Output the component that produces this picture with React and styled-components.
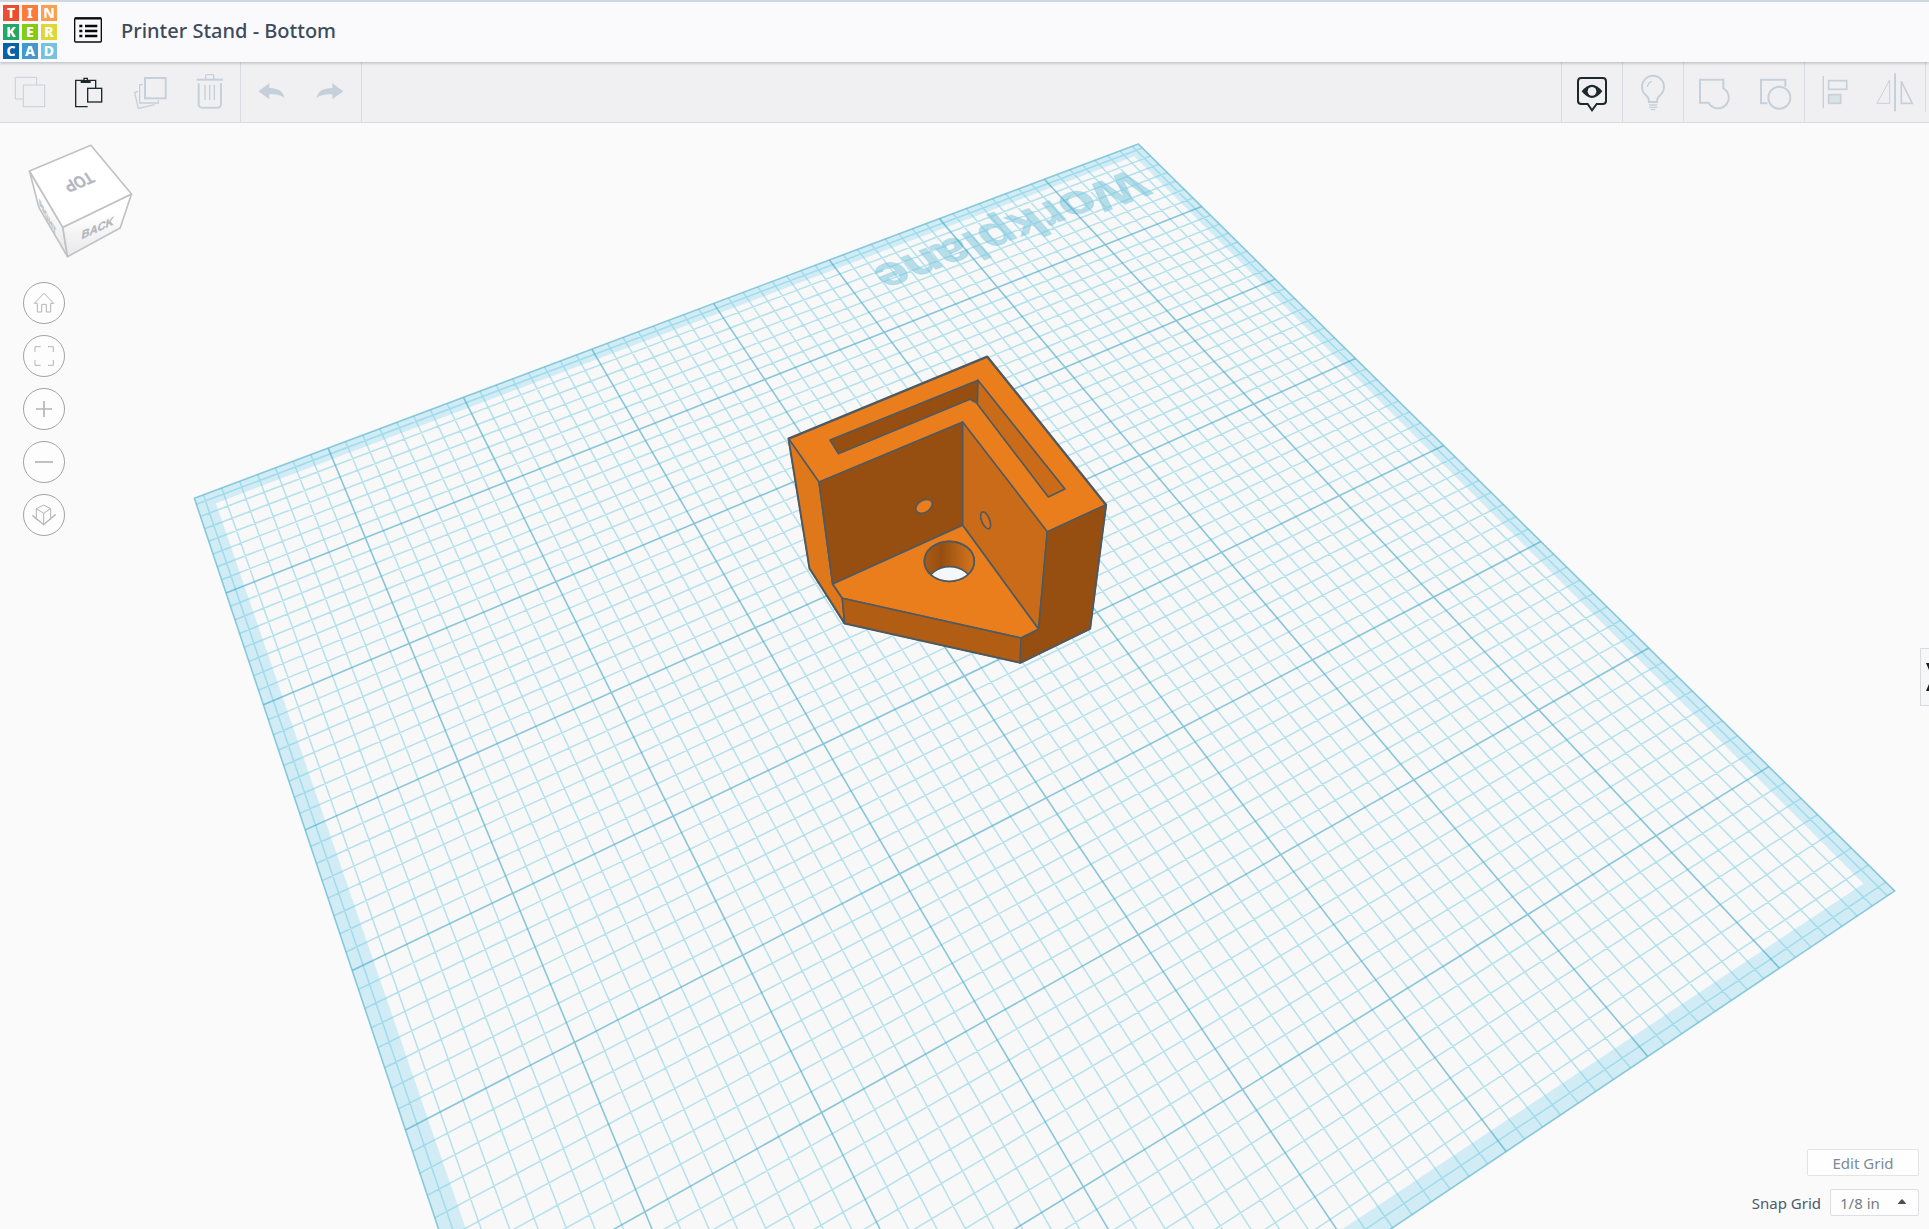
import React from 'react'
import styled, { createGlobalStyle } from 'styled-components'

/* Projection of the 200mm workplane (normalised 0..1) onto the viewport */
const SIDE = 200 / 25.4
const project = (a, b) => {
  const u = a / SIDE
  const v = b / SIDE
  const w = 1 - 0.182 * u - 0.323 * v
  return [
    (-979.3 * u + 144.4 * v + 1138.3) / w,
    (263.6 * u + 459.1 * v + 144) / w
  ]
}

const line = (from, to) => `M${project(...from).join(' ')}L${project(...to).join(' ')}`
const quad = (a0, b0, a1, b1) =>
  [[a0, b0], [a1, b0], [a1, b1], [a0, b1]].map(p => project(...p).join(',')).join(' ')

const gridPaths = () => {
  let minor = ''
  let major = ''
  for (let i = -31; i <= 31; i++) {
    const at = SIDE / 2 + i / 8
    const d = line([at, 0], [at, SIDE]) + line([0, at], [SIDE, at])
    if (i % 8 === 0) major += d
    else minor += d
  }
  return { minor, major }
}

const grid = gridPaths()
const BAND = 0.12

/* Affine frame for the label that lies on the plane */
const labelMatrix = () => {
  const start = project(0.23, 0.25)
  const end = project(2.73, 0.26)
  const mid = project(1.47, 0.25)
  const up = project(1.47, 0.66)
  return `matrix(${[
    (end[0] - start[0]) / 246,
    (end[1] - start[1]) / 246,
    (mid[0] - up[0]) / 40,
    (mid[1] - up[1]) / 40,
    start[0],
    start[1]
  ].join(' ')})`
}

const logo = [
  ['T', '#ef4b32'], ['I', '#fb7b3b'], ['N', '#fba04c'],
  ['K', '#22a765'], ['E', '#86cb11'], ['R', '#dcd83a'],
  ['C', '#0562a8'], ['A', '#4398cf'], ['D', '#76c1de']
]

const editTools = [
  { label: 'Copy', icon: <><path d='M34 75H10V10h64v23' /><rect x='34' y='33' width='64' height='65' /></> },
  {
    label: 'Paste',
    dark: true,
    icon: <>
      <path d='M47 98H11V19h60v24' strokeWidth='4' />
      <path d='M26 18h8v-7h14v7h8v9H26z' fill='currentColor' stroke='none' />
      <path d='M38 18v-3h6v3z' fill='#f0f0f2' stroke='none' />
      <rect x='47' y='43' width='42' height='41' strokeWidth='4' />
    </>
  },
  {
    label: 'Duplicate',
    icon: <>
      <rect x='39' y='12' width='62' height='61' strokeWidth='6' />
      <path d='M33 32H23v55h56V79M18 52L8 56l11 47 49-11' strokeWidth='4' />
    </>
  },
  {
    label: 'Delete',
    icon: <>
      <path d='M14 17h79' strokeWidth='6' />
      <path d='M41 15V5q0-3 3-3h18q3 0 3 3v10' strokeWidth='4' />
      <path d='M20 28v62q0 11 11 11h45q11 0 11-11V28' strokeWidth='6' />
      <path d='M39 32v46M53 32v46M67 32v46' strokeWidth='4' />
    </>
  }
]

const historyTools = [
  { label: 'Undo', icon: <path d='M16 52L49 28v14q41 0 45 30q-15-13-45-11v15z' fill='currentColor' stroke='none' /> },
  { label: 'Redo', icon: <path d='M91 52L58 28v14q-43 0-47 30q15-13 47-11v15z' fill='currentColor' stroke='none' /> }
]

const viewTools = [[
  {
    label: 'Show notes',
    dark: true,
    icon: <>
      <path d='M22 12h64q10 0 10 10v58q0 10-10 10H68L54 109 41 90H22q-10 0-10-10V22q0-10 10-10z' strokeWidth='6' />
      <path d='M23 52q31-40 62 0q-31 40-62 0z' fill='currentColor' stroke='none' />
      <circle cx='54' cy='52' r='13' fill='#f0f0f2' stroke='none' />
    </>
  }
], [
  {
    label: 'Show all',
    icon: <>
      <path d='M42 84q0-12-9-20a33 33 0 1 1 42 0q-9 8-9 20z' strokeWidth='6' />
      <path d='M37 39q2-14 14-17' strokeWidth='4' />
      <path d='M42 93h25M42 100h25M47 107h14' strokeWidth='4' />
    </>
  }
], [
  { label: 'Group', icon: <path d='M12 17H82V43A32 32 0 1 1 38 86H12z' strokeWidth='6' /> },
  {
    label: 'Ungroup',
    icon: <>
      <path d='M34 88H15V17h73v21' strokeWidth='6' />
      <circle cx='70' cy='71' r='33' strokeWidth='6' />
    </>
  }
], [
  {
    label: 'Align',
    icon: <>
      <path d='M19 6v97' strokeWidth='4' />
      <rect x='35' y='20' width='54' height='26' strokeWidth='5' />
      <rect x='35' y='62' width='36' height='26' strokeWidth='5' fill='#dbe2e8' />
    </>
  },
  {
    label: 'Mirror',
    icon: <>
      <path d='M54-2v114' strokeWidth='6' />
      <path d='M0 88L38 18v70z' />
      <path d='M73 22l33 66H73z' strokeWidth='5' />
    </>
  }
]]

const navTools = [
  { label: 'Home view', icon: <path d='M7 37L36 7l29 30h-9v26H43V40H29v23H16V37z' /> },
  { label: 'Fit all in view', icon: <path d='M9 24V8h17M48 8h16v16M64 48v16H48M26 64H9V48' /> },
  { label: 'Zoom in', icon: <path d='M12 36h48M36 12v48' strokeWidth='5' /> },
  { label: 'Zoom out', icon: <path d='M9 36h54' strokeWidth='5' /> },
  {
    label: 'Switch to flat view',
    icon: <>
      <path d='M13 50V17L35 6l21 11v33M13 17l22 14 21-14M35 31v34' />
      <path d='M1 37l34 28 36-31' strokeWidth='4' />
    </>
  }
]

const Tool = ({ tool }) => (
  <ToolButton type='button' aria-label={tool.label} $dark={tool.dark}>
    <ToolIcon viewBox='0 0 108 108'>{tool.icon}</ToolIcon>
  </ToolButton>
)

const Workplane = () => (
  <Canvas viewBox='0 123 1929 1106' preserveAspectRatio='xMinYMin slice'>
    <polygon points={quad(0, 0, SIDE, SIDE)} fill='#f8f8f8' />
    <g fill='#9adcf0' fillOpacity='0.42'>
      <polygon points={quad(0, 0, SIDE, BAND)} />
      <polygon points={quad(0, SIDE - BAND, SIDE, SIDE)} />
      <polygon points={quad(0, BAND, BAND, SIDE - BAND)} />
      <polygon points={quad(SIDE - BAND, BAND, SIDE, SIDE - BAND)} />
    </g>
    <PlaneLabel transform={labelMatrix()}>Workplane</PlaneLabel>
    <path d={grid.minor} fill='none' stroke='#6cc8e2' strokeOpacity='0.48' strokeWidth='1.5' />
    <path d={grid.major} fill='none' stroke='#4fabc9' strokeOpacity='0.65' strokeWidth='1.6' />
    <polygon points={quad(0, 0, SIDE, SIDE)} fill='none' stroke='#5fb6d0' strokeOpacity='0.7' strokeWidth='1.6' />
    <Bracket />
  </Canvas>
)

const Bracket = () => (
  <g transform='translate(770 340) scale(0.3333)' stroke='#4f5a60' strokeWidth='5' strokeLinejoin='round'>
    <polygon points='56,296 652,50 1008,494 960,866 751,968 224,850 119,685' fill='#ea7e1d' strokeWidth='7' />
    <polygon points='56,296 147,426 188,732 217,775 224,850 119,685' fill='#df771b' />
    <polygon points='147,426 578,246 578,556 188,732' fill='#964f11' />
    <polygon points='578,246 832,575 806,868 578,556' fill='#c96b19' />
    <polygon points='188,732 578,556 806,868 753,894 217,775' fill='#ea7e1d' />
    <polygon points='217,775 753,894 751,968 224,850' fill='#b25d14' />
    <polygon points='832,575 1008,494 960,866 751,968 753,894 806,868' fill='#964f11' />
    <polygon points='180,300 624,121 622,190 600,178 205,341' fill='#964f11' />
    <polygon points='624,121 885,447 835,471 622,192' fill='#c96b19' />
    <ellipse cx='462' cy='499' rx='27' ry='18' transform='rotate(-33 462 499)' fill='#ea7e1d' />
    <ellipse cx='647' cy='541' rx='12' ry='27' transform='rotate(-22 647 541)' fill='#d6711a' />
    <clipPath id='bore'><ellipse cx='538' cy='664' rx='75' ry='60' /></clipPath>
    <linearGradient id='boreWall'>
      <stop offset='0' stopColor='#a95a15' />
      <stop offset='0.35' stopColor='#964f11' />
      <stop offset='1' stopColor='#d6751d' />
    </linearGradient>
    <ellipse cx='538' cy='664' rx='75' ry='60' fill='url(#boreWall)' />
    <ellipse cx='539' cy='732' rx='66' ry='52' fill='#f5f8fa' clipPath='url(#bore)' />
    <ellipse cx='538' cy='664' rx='75' ry='60' fill='none' />
  </g>
)

const ViewCube = () => (
  <Cube viewBox='80 66 326 354'>
    <defs>
      <linearGradient id='cubeSide' x1='0' y1='0' x2='0' y2='1'>
        <stop offset='0.3' stopColor='#ffffff' />
        <stop offset='1' stopColor='#e8e8ea' />
      </linearGradient>
    </defs>
    <g stroke='#c2c2c4' strokeWidth='5' strokeLinejoin='round'>
      <polygon points='90,153 190,322 204,410 118,262' fill='url(#cubeSide)' />
      <polygon points='190,322 396,222 362,324 204,410' fill='url(#cubeSide)' />
      <polygon points='90,153 274,76 396,222 190,322' fill='#ffffff' />
    </g>
    <CubeLabel transform='matrix(-0.86 0.36 -0.62 -0.95 229 171)' fontSize='46'>TOP</CubeLabel>
    <CubeLabel transform='matrix(0.92 -0.42 -0.12 1 293 336)' fontSize='36'>BACK</CubeLabel>
    <CubeLabel transform='matrix(0.48 0.88 0.1 0.95 145 302)' fontSize='34'>RIGHT</CubeLabel>
  </Cube>
)

const App = () => (
  <Page>
    <GlobalStyle />
    <Header>
      <Logo href='#' aria-label='Tinkercad'>
        {logo.map(([letter, color]) => <LogoCell key={letter} $color={color}>{letter}</LogoCell>)}
      </Logo>
      <MenuButton type='button' aria-label='Designs'>
        <svg width='28' height='26' viewBox='0 0 84 78' fill='none' stroke='#0a0a0c'>
          <rect x='2' y='4' width='80' height='71' rx='3' strokeWidth='4' />
          <path d='M2 4h80' strokeWidth='7' />
          <path d='M33 27h37M33 42h37M33 57h37M16 27h9M16 42h9M16 57h9' strokeWidth='8' />
        </svg>
      </MenuButton>
      <Title>Printer Stand - Bottom</Title>
    </Header>
    <Toolbar>
      <ToolGroup $side='right'>{editTools.map(t => <Tool key={t.label} tool={t} />)}</ToolGroup>
      <ToolGroup $side='right'>{historyTools.map(t => <Tool key={t.label} tool={t} />)}</ToolGroup>
      <Spacer />
      {viewTools.map(group => (
        <ToolGroup key={group[0].label} $side='left'>
          {group.map(t => <Tool key={t.label} tool={t} />)}
        </ToolGroup>
      ))}
      <ToolbarEnd />
    </Toolbar>
    <Scene>
      <Workplane />
      <ViewPanel>
        <ViewCube />
        <NavList>
          {navTools.map(t => (
            <NavButton key={t.label} type='button' aria-label={t.label}>
              <svg width='24' height='24' viewBox='0 0 72 72' fill='none' stroke='#b4b4b4' strokeWidth='3'>
                {t.icon}
              </svg>
            </NavButton>
          ))}
        </NavList>
      </ViewPanel>
      <DrawerTab type='button' aria-label='Show shapes'>
        <svg width='14' height='28' viewBox='0 0 14 28'>
          <path d='M0 0h4l8 14-8 14H0l6-14z' fill='#1c1c1e' />
        </svg>
      </DrawerTab>
      <GridPanel>
        <GridButton type='button'>Edit Grid</GridButton>
        <SnapRow>
          <label htmlFor='snap'>Snap Grid</label>
          <SelectBox>
            <SnapSelect id='snap' defaultValue='1/8 in'>
              <option>1/16 in</option>
              <option>1/8 in</option>
              <option>1/4 in</option>
            </SnapSelect>
            <Caret viewBox='0 0 8 5'><path d='M0 5q0-1 4-5q4 4 4 5z' fill='#4b4f54' /></Caret>
          </SelectBox>
        </SnapRow>
      </GridPanel>
    </Scene>
  </Page>
)

export default App

const fontFamily = '"Noto Sans", "Open Sans", sans-serif'

const GlobalStyle = createGlobalStyle`
  * {
    box-sizing: border-box;
  }
  body {
    margin: 0;
    font-family: ${fontFamily};
    background: #fafafa;
  }
  button, select {
    font-family: inherit;
    margin: 0;
    padding: 0;
  }
`

const Page = styled.div`
  display: flex;
  flex-direction: column;
  height: 100vh;
  overflow: hidden;
`

const Header = styled.header`
  display: flex;
  align-items: center;
  flex: none;
  height: 62px;
  padding: 0 3px;
  background: #fafafd;
  border-top: 2px solid #cfd8de;
  box-shadow: 0 1px 3px rgba(60, 70, 90, 0.35);
  z-index: 1;
`

const Logo = styled.a`
  display: grid;
  grid-template-columns: repeat(3, 16px);
  grid-auto-rows: 16px;
  gap: 3px;
  text-decoration: none;
`

const LogoCell = styled.span`
  background: ${props => props.$color};
  color: #fff;
  font-size: 14px;
  line-height: 16px;
  font-weight: 800;
  text-align: center;
`

const MenuButton = styled.button`
  display: flex;
  margin: 0 19px 4px 17px;
  border: none;
  background: none;
`

const Title = styled.h1`
  margin: 0 0 2px;
  font-size: 20px;
  line-height: 28px;
  font-weight: 500;
  color: #3d4b5c;
`

const Toolbar = styled.div`
  display: flex;
  flex: none;
  height: 61px;
  background: #f0f0f2;
  border-bottom: 1px solid #d9dbe0;
`

const ToolGroup = styled.div`
  display: flex;
  border-${props => props.$side}: 1px solid #d9dce2;
`

const ToolButton = styled.button`
  display: flex;
  align-items: center;
  justify-content: center;
  width: 60px;
  height: 60px;
  border: none;
  background: none;
  color: ${props => props.$dark ? '#1d282d' : '#c5d0da'};
`

const ToolIcon = styled.svg`
  width: 36px;
  height: 36px;
  overflow: visible;
  fill: none;
  stroke: currentColor;
  stroke-width: 3px;

  [stroke-width='4'] { stroke-width: 4px; }
  [stroke-width='5'] { stroke-width: 5px; }
  [stroke-width='6'] { stroke-width: 6px; }
`

const Spacer = styled.div`
  flex: 1;
`

const ToolbarEnd = styled.div`
  width: 4px;
  height: 50px;
  border-left: 1px solid #d9dce2;
`

const Scene = styled.main`
  position: relative;
  flex: 1;
  min-height: 0;
  background: #fafafa;
`

const Canvas = styled.svg`
  display: block;
  width: 100%;
  height: 100%;
`

const PlaneLabel = styled.text`
  font-family: "Liberation Sans", Arial, sans-serif;
  font-size: 48px;
  font-weight: bold;
  fill: #8ccbde;
  fill-opacity: 0.6;
  stroke: #8ccbde;
  stroke-opacity: 0.4;
  stroke-width: 1px;
`

const ViewPanel = styled.div`
  position: absolute;
  top: 19px;
  left: 23px;
  display: flex;
  flex-direction: column;
  gap: 22px;
`

const Cube = styled.svg`
  width: 109px;
  height: 118px;
  margin-left: 3px;
`

const CubeLabel = styled.text`
  font-family: "Liberation Sans", Arial, sans-serif;
  font-weight: bold;
  fill: #b3b6bf;
  stroke: #b3b6bf;
  stroke-width: 1px;
  text-anchor: middle;
`

const NavList = styled.div`
  display: flex;
  flex-direction: column;
  gap: 11px;
`

const NavButton = styled.button`
  display: flex;
  align-items: center;
  justify-content: center;
  width: 42px;
  height: 42px;
  border: 1px solid #a3a3a3;
  border-radius: 50%;
  background: #fdfdfd;
`

const DrawerTab = styled.button`
  position: absolute;
  top: 525px;
  right: 0;
  display: flex;
  align-items: center;
  width: 9px;
  height: 58px;
  padding-left: 5px;
  border: 1px solid #d8dadd;
  border-right: none;
  background: #f6f7f8;
  overflow: hidden;

  svg {
    flex: none;
  }
`

const GridPanel = styled.div`
  position: absolute;
  right: 10px;
  bottom: 13px;
  display: flex;
  flex-direction: column;
  align-items: flex-end;
  gap: 13px;
  font-size: 15px;
  color: #4c5a6b;
`

const GridButton = styled.button`
  width: 112px;
  height: 27px;
  border: 1px solid #e2e4e6;
  border-radius: 2px;
  background: #fefefe;
  font-size: 15px;
  color: #7a8b99;
`

const SnapRow = styled.div`
  display: flex;
  align-items: center;
  gap: 9px;
`

const SelectBox = styled.div`
  position: relative;
`

const SnapSelect = styled.select`
  display: block;
  width: 89px;
  height: 27px;
  padding: 0 24px 0 9px;
  appearance: none;
  border: 1px solid #dddfe2;
  border-radius: 2px;
  background: #fefefe;
  font-size: 15px;
  color: #777d84;
`

const Caret = styled.svg`
  position: absolute;
  top: 10px;
  right: 13px;
  width: 8px;
  height: 5px;
  pointer-events: none;
`
